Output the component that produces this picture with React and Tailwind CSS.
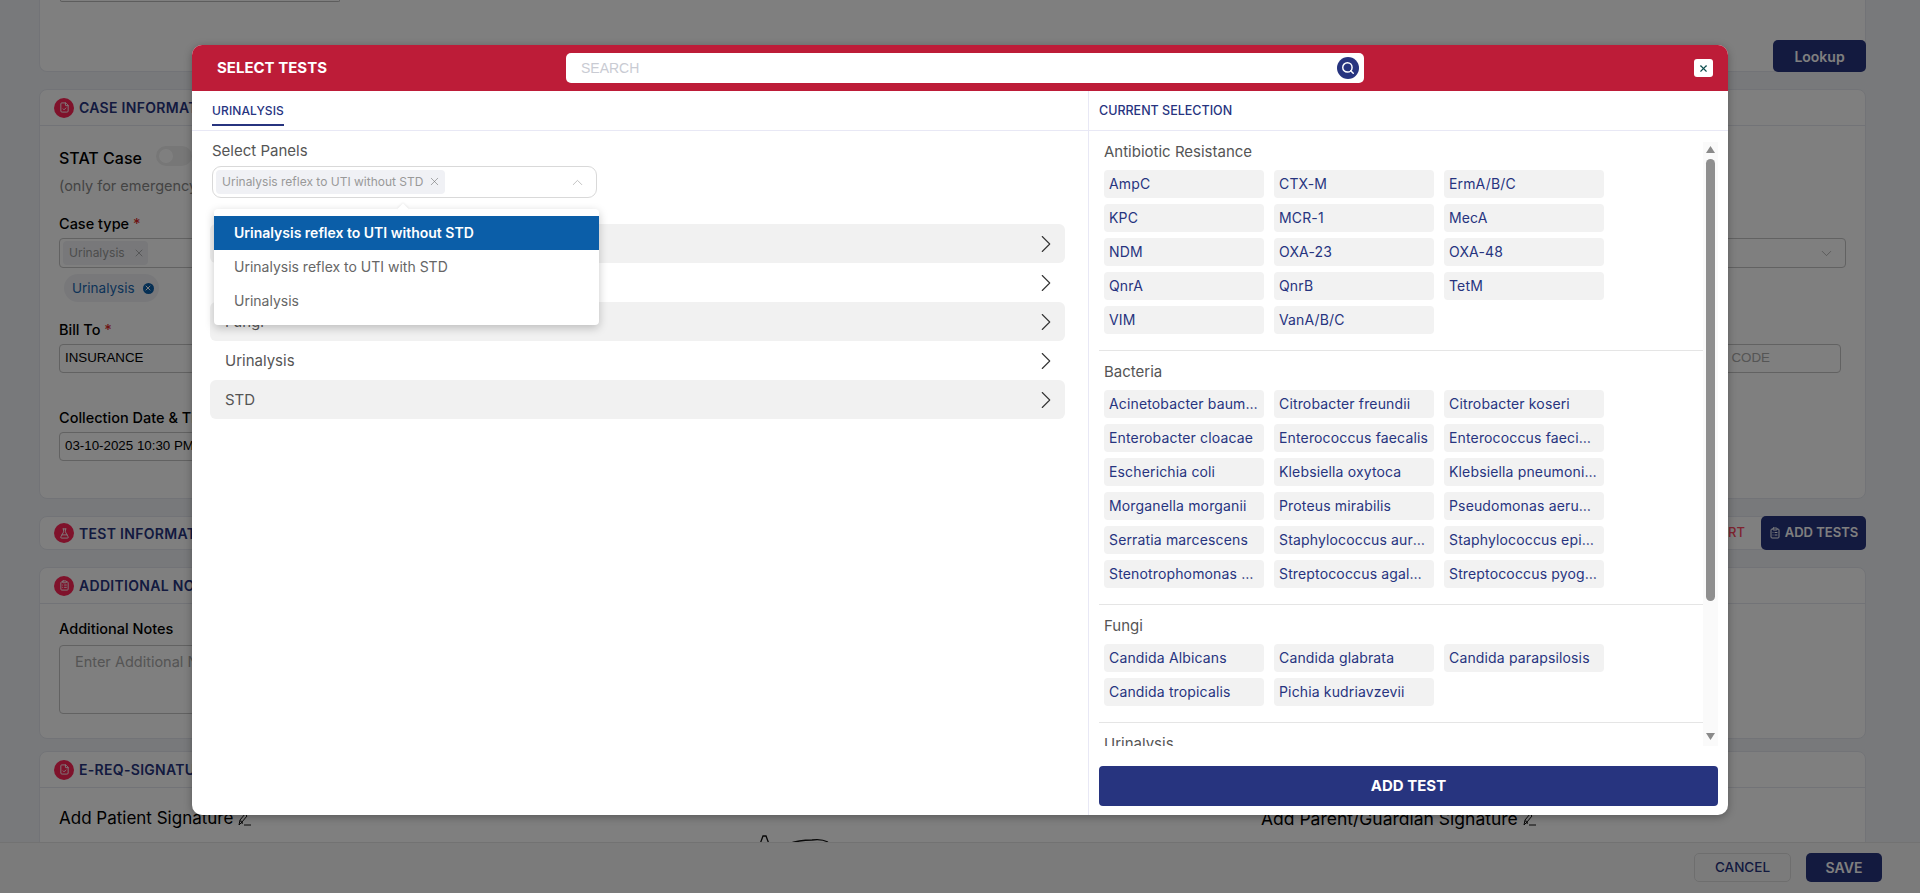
import React from "react";
import { Search, X, ChevronRight, ChevronUp, ChevronDown, FileCheck, FlaskConical, ClipboardList } from "lucide-react";

const groups = [
  { name: "Antibiotic Resistance", items: ["AmpC", "CTX-M", "ErmA/B/C", "KPC", "MCR-1", "MecA", "NDM", "OXA-23", "OXA-48", "QnrA", "QnrB", "TetM", "VIM", "VanA/B/C"] },
  { name: "Bacteria", items: ["Acinetobacter baumannii", "Citrobacter freundii", "Citrobacter koseri", "Enterobacter cloacae", "Enterococcus faecalis", "Enterococcus faecium", "Escherichia coli", "Klebsiella oxytoca", "Klebsiella pneumoniae", "Morganella morganii", "Proteus mirabilis", "Pseudomonas aeruginosa", "Serratia marcescens", "Staphylococcus aureus", "Staphylococcus epidermidis", "Stenotrophomonas maltophilia", "Streptococcus agalactiae", "Streptococcus pyogenes"] },
  { name: "Fungi", items: ["Candida Albicans", "Candida glabrata", "Candida parapsilosis", "Candida tropicalis", "Pichia kudriavzevii"] },
  { name: "Urinalysis", items: ["Urinalysis"] },
];

const rows = ["Antibiotic Resistance", "Bacteria", "Fungi", "Urinalysis", "STD"];

function SignIcon() {
  return (
    <svg width="15" height="15" viewBox="0 0 15 15" fill="none" stroke="#111" strokeWidth="1">
      <path d="M2 13 L3 8 L8 2 L10 4 L5 10 Z" />
      <path d="M3 9 C5 9 6 10 5 12" />
      <path d="M7 13 H14" />
    </svg>
  );
}

function CardHead({ icon: Icon, title, children, compact }) {
  return (
    <div className={`flex items-center justify-between pl-[14px] ${compact ? "h-[32px]" : "h-[35px]"}`}>
      <div className="flex items-center gap-[5px]">
        <span className="flex h-5 w-5 items-center justify-center rounded-full bg-[#ff2456] text-white">
          <Icon size={11} />
        </span>
        <span className="text-[14px] font-semibold tracking-[0.3px] text-[#27347f]">{title}</span>
      </div>
      {children}
    </div>
  );
}

function Label({ children, req }) {
  return (
    <div className="h-5 text-[14.5px] font-medium leading-[18px] text-black">
      {children}
      {req && <span className="text-[#dc2626]"> *</span>}
    </div>
  );
}

function Background() {
  return (
    <div className="ml-[39px] mr-[54px] flex flex-col">
      <div className="relative h-[72px] rounded-b-lg border border-t-0 border-[#e5e7ee] bg-white">
        <div className="ml-5 h-[2px] w-[280px] rounded-b border-x border-b border-[#bbb]" />
        <button className="absolute -bottom-px -right-px flex h-8 w-[93px] items-center justify-center rounded-[5px] bg-[#27347f] text-[14px] font-semibold text-white">Lookup</button>
      </div>

      <div className="mt-[17px] h-[410px] rounded-lg border border-[#e5e7ee] bg-white">
        <div className="border-b border-[#e5e7ee]"><CardHead icon={FileCheck} title="CASE INFORMATION" /></div>
        <div className="px-[19px] pt-5">
          <div className="flex h-5 items-start gap-[14px]">
            <span className="mt-[2px] text-[16px] font-medium leading-5 text-black">STAT Case</span>
            <span className="flex h-5 w-9 items-center rounded-full bg-[#eeeeee] pl-[3px]"><span className="h-[14px] w-[14px] rounded-full bg-white" /></span>
          </div>
          <div className="mt-[10px] h-5 text-[14.5px] leading-5 text-[#888]">(only for emergency cases)</div>
          <div className="mt-[19px]"><Label req>Case type</Label></div>
          <div className="mt-[3px] flex h-[30px] items-center justify-between rounded border border-[#c4c4c4] pl-[3px] pr-[10px]">
            <span className="flex h-6 w-[85px] items-center gap-2 rounded bg-[#f0f1f5] pl-[6px] text-[12px] text-[#999]">Urinalysis <X size={12} strokeWidth={1.1} className="text-[#777]" /></span>
            <ChevronDown size={17} strokeWidth={1} className="text-[#999]" />
          </div>
          <div className="ml-[5px] mt-[6px] flex h-7 w-[95px] items-center gap-2 rounded-full bg-[#f0f1f5] pl-2 text-[13.5px] text-[#1a67b0]">
            Urinalysis <span className="flex h-[11px] w-[11px] shrink-0 items-center justify-center rounded-full bg-[#0b5ea8] text-white"><X size={8} strokeWidth={3} /></span>
          </div>
          <div className="mt-[19px]"><Label req>Bill To</Label></div>
          <div className="mt-[3px] flex items-start justify-between pr-[5px]">
            <div className="flex h-[29px] w-[500px] items-center rounded border border-[#c4c4c4] pb-px pl-[5px] font-['Liberation_Sans',sans-serif] text-[13.33px] text-black">INSURANCE</div>
            <div className="flex h-[29px] w-[200px] items-center justify-end rounded border border-[#c4c4c4] pb-px pr-[70px] font-['Liberation_Sans',sans-serif] text-[13.33px] text-[#aaa]">CODE</div>
          </div>
          <div className="mt-[36px]"><Label>Collection Date &amp; Time</Label></div>
          <div className="mt-[3px] flex h-[29px] w-[300px] items-center rounded border border-[#c4c4c4] pb-px pl-[5px] font-['Liberation_Sans',sans-serif] text-[13.33px] text-black">03-10-2025 10:30 PM</div>
        </div>
      </div>

      <div className="mt-[17px] h-[34px] rounded-lg border border-[#e5e7ee] bg-white">
        <CardHead compact icon={FlaskConical} title="TEST INFORMATION">
          <div className="-mr-px flex items-center gap-4">
            <span className="text-[13px] font-medium text-[#ff4860]">RESTART</span>
            <button className="flex h-[34px] w-[105px] items-center justify-center gap-1 rounded-[5px] bg-[#27347f] text-[13px] font-semibold text-white">
              <ClipboardList size={12} /> ADD TESTS
            </button>
          </div>
        </CardHead>
      </div>

      <div className="mt-[17px] h-[172px] rounded-lg border border-[#e5e7ee] bg-white">
        <div className="border-b border-[#e5e7ee]"><CardHead icon={ClipboardList} title="ADDITIONAL NOTES" /></div>
        <div className="px-[19px] pt-[16px]">
          <Label>Additional Notes</Label>
          <div className="mt-[5px] h-[69px] w-[1000px] rounded border border-[#c4c4c4] pl-[15px] pt-[5px] text-[14.5px] text-[#aaa]">Enter Additional Notes</div>
        </div>
      </div>

      <div className="mt-3 h-[200px] rounded-lg border border-[#e5e7ee] bg-white">
        <div className="border-b border-[#e5e7ee]"><CardHead icon={FileCheck} title="E-REQ-SIGNATURE" /></div>
        <div className="flex px-[19px] pt-[19px]">
          <div className="w-[1202px]">
            <div className="flex h-6 items-center gap-1 text-[17px] text-black">Add Patient Signature <SignIcon /></div>
            <svg className="ml-[701px] mt-[2px] block" width="70" height="12" viewBox="0 0 70 12" fill="none" stroke="#111" strokeWidth="1.3">
              <path d="M0 11 L3 3 L6 3 L9 11" />
              <path d="M28 11 C36 8 44 7 52 7 C58 6 62 6 68 9" />
            </svg>
          </div>
          <div className="flex h-6 items-center gap-1 text-[17.5px] text-black">Add Parent/Guardian Signature <SignIcon /></div>
        </div>
      </div>
    </div>
  );
}

function Modal() {
  return (
    <div className="absolute left-[192px] top-[45px] flex h-[770px] w-[1536px] flex-col rounded-[10px] bg-white shadow-[0_2px_8px_rgba(0,0,0,0.3)]">
      <div className="flex h-[46px] shrink-0 items-center rounded-t-[10px] bg-[#bd1c38] pl-[25px] pr-[15px]">
        <div className="w-[349px] text-[15px] font-bold text-white">SELECT TESTS</div>
        <div className="flex h-[30px] w-[798px] items-center justify-between rounded-[5px] bg-white pl-[15px] pr-[5px]">
          <span className="font-['Liberation_Sans',sans-serif] text-[14px] text-[#c9cbd3]">SEARCH</span>
          <span className="flex h-[22px] w-[22px] items-center justify-center rounded-full bg-[#27347f] text-white"><Search size={14} strokeWidth={2.5} /></span>
        </div>
        <button className="ml-auto flex h-[18px] w-[19px] items-center justify-center rounded-[3px] bg-white text-[#0f5050]"><X size={11} strokeWidth={2.5} /></button>
      </div>

      <div className="flex min-h-0 flex-1">
        <div className="relative w-[897px] shrink-0 border-r border-[#e8e8f5]">
          <div className="h-[40px] border-b border-[#e8e8f5] pl-5">
            <div className="flex h-[35px] w-[72px] items-end justify-center whitespace-nowrap border-b-2 border-[#27347f] pb-[4px] text-[12px] font-medium tracking-[0.1px] text-[#27347f]">URINALYSIS</div>
          </div>
          <div className="ml-5 mt-[9px] h-5 text-[15px] leading-[22px] text-[#555]">Select Panels</div>
          <div className="ml-5 mt-[6px] flex h-8 w-[385px] items-center justify-between rounded-[9px] border border-[#d9d9d9] pl-[3px] pr-[10px]">
            <span className="flex h-6 w-[229px] items-center justify-between rounded bg-[#f0f1f5] pl-[6px] pr-[4px] text-[12px] text-[#999]">
              Urinalysis reflex to UTI without STD <X size={13} strokeWidth={1} className="mb-[2px] text-[#666]" />
            </span>
            <ChevronUp size={17} strokeWidth={1} className="text-[#aaa]" />
          </div>
          <div className="ml-[18px] mt-[26px] w-[855px]">
            {rows.map((r, i) => (
              <div key={r} className={`flex h-[39px] items-center justify-between rounded-[6px] pl-[15px] pr-[4px] text-[15px] text-[#555] ${i % 2 === 0 ? "bg-[#f1f1f1]" : ""}`}>
                <span className="mt-[2px]">{r}</span>
                <ChevronRight size={30} strokeWidth={0.85} className="text-[#333]" />
              </div>
            ))}
          </div>
          <div className="absolute left-[22px] top-[118px] w-[385px] rounded bg-white py-[7px] shadow-[0_3px_10px_rgba(0,0,0,0.22)]">
            <div className="absolute -top-[4px] left-[185px] h-2 w-2 rotate-45 bg-white shadow-[-1px_-1px_2px_rgba(0,0,0,0.06)]" />
            <div className="relative flex h-[34px] items-center bg-[#0b5ea8] pb-px pl-5 text-[14px] font-semibold text-white">Urinalysis reflex to UTI without STD</div>
            <div className="flex h-[34px] items-center pb-px pl-5 text-[14px] text-[#666]">Urinalysis reflex to UTI with STD</div>
            <div className="flex h-[34px] items-center pb-px pl-5 text-[14px] text-[#666]">Urinalysis</div>
          </div>
        </div>

        <div className="flex min-w-0 flex-1 flex-col">
          <div className="flex h-[40px] shrink-0 items-center border-b border-[#e8e8f5] pl-[10px] pt-px text-[12.5px] font-medium text-[#27347f]">CURRENT SELECTION</div>
          <div className="ml-[10px] flex h-[615px] w-[619px] shrink-0">
            <div className="h-full w-[604px] overflow-hidden">
              {groups.map((g, i) => (
                <div key={g.name} className={`pb-4 pt-[10px] ${i > 0 ? "border-t border-[#e5e5e5]" : ""}`}>
                  <div className="ml-[5px] h-5 text-[15px] leading-[22px] text-[#555]">{g.name}</div>
                  <div className="ml-[5px] mt-[9px] grid grid-cols-[repeat(3,160px)] gap-x-[10px] gap-y-[6px]">
                    {g.items.map((t) => (
                      <div key={t} className="h-7 truncate rounded bg-[#f2f2f2] px-[5px] text-[14px] leading-[27px] tracking-[0.15px] text-[#27347f]">{t}</div>
                    ))}
                  </div>
                </div>
              ))}
            </div>
            <div className="mt-[11px] flex h-[604px] w-[15px] flex-col items-center bg-[#fafafa]">
              <svg className="mt-[4px]" width="9" height="7" viewBox="0 0 9 7"><path d="M4.5 0 L9 7 L0 7 Z" fill="#8a8a8a" /></svg>
              <div className="mt-[6px] h-[442px] w-[9px] rounded-full bg-[#8f8f8f]" />
              <svg className="mb-[6px] mt-auto" width="9" height="7" viewBox="0 0 9 7"><path d="M0 0 L9 0 L4.5 7 Z" fill="#8a8a8a" /></svg>
            </div>
          </div>
          <button className="ml-[10px] mt-[20px] h-10 w-[619px] shrink-0 rounded bg-[#27347f] text-[15px] font-bold text-white">ADD TEST</button>
        </div>
      </div>
    </div>
  );
}

export default function App() {
  return (
    <div className="relative h-[893px] overflow-hidden bg-[#f0f3f7] font-['Inter',sans-serif]">
      <Background />
      <div className="absolute inset-x-0 bottom-0 flex h-[51px] items-start justify-end gap-[15px] border-t border-[#e5e5e5] bg-[#f7f7f7] pr-[38px] pt-[10px]">
        <button className="h-[29px] w-[97px] rounded-[5px] border border-[#ddd] text-[13.5px] font-medium text-[#27347f]">CANCEL</button>
        <button className="h-[29px] w-[76px] rounded-[5px] bg-[#27347f] text-[14px] font-semibold text-white">SAVE</button>
      </div>
      <div className="absolute inset-0 bg-black/50" />
      <Modal />
    </div>
  );
}
